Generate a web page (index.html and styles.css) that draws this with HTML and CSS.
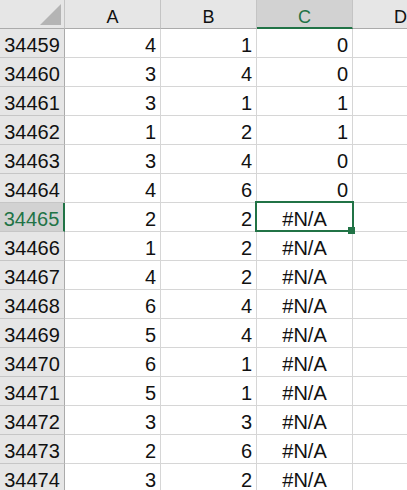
FILE: index.html
```html
<!DOCTYPE html>
<html lang="en">
<head>
    <meta charset="UTF-8">
    <title>Sheet1</title>
    <link rel="stylesheet" href="styles.css">
</head>
<body>

<div class="sheet">

    <!--  column headers  -->
    <div class="row head">
        <div class="corner">
            <svg width="21" height="21" viewBox="0 0 21 21"><polygon points="21,0 21,21 0,21" fill="#b4b4b4"/></svg>
        </div>
        <div class="col">A</div>
        <div class="col">B</div>
        <div class="col sel">C</div>
        <div class="col">D</div>
    </div>

    <div class="row"><div class="rh">34459</div><div class="num">4</div><div class="num">1</div><div class="num">0</div><div class="cell"></div></div>
    <div class="row"><div class="rh">34460</div><div class="num">3</div><div class="num">4</div><div class="num">0</div><div class="cell"></div></div>
    <div class="row"><div class="rh">34461</div><div class="num">3</div><div class="num">1</div><div class="num">1</div><div class="cell"></div></div>
    <div class="row"><div class="rh">34462</div><div class="num">1</div><div class="num">2</div><div class="num">1</div><div class="cell"></div></div>
    <div class="row"><div class="rh">34463</div><div class="num">3</div><div class="num">4</div><div class="num">0</div><div class="cell"></div></div>
    <div class="row"><div class="rh">34464</div><div class="num">4</div><div class="num">6</div><div class="num">0</div><div class="cell"></div></div>

    <!--  active cell row  -->
    <div class="row"><div class="rh sel">34465</div><div class="num">2</div><div class="num">2</div><div class="err active">#N/A</div><div class="cell"></div></div>

    <div class="row"><div class="rh">34466</div><div class="num">1</div><div class="num">2</div><div class="err">#N/A</div><div class="cell"></div></div>
    <div class="row"><div class="rh">34467</div><div class="num">4</div><div class="num">2</div><div class="err">#N/A</div><div class="cell"></div></div>
    <div class="row"><div class="rh">34468</div><div class="num">6</div><div class="num">4</div><div class="err">#N/A</div><div class="cell"></div></div>
    <div class="row"><div class="rh">34469</div><div class="num">5</div><div class="num">4</div><div class="err">#N/A</div><div class="cell"></div></div>
    <div class="row"><div class="rh">34470</div><div class="num">6</div><div class="num">1</div><div class="err">#N/A</div><div class="cell"></div></div>
    <div class="row"><div class="rh">34471</div><div class="num">5</div><div class="num">1</div><div class="err">#N/A</div><div class="cell"></div></div>
    <div class="row"><div class="rh">34472</div><div class="num">3</div><div class="num">3</div><div class="err">#N/A</div><div class="cell"></div></div>
    <div class="row"><div class="rh">34473</div><div class="num">2</div><div class="num">6</div><div class="err">#N/A</div><div class="cell"></div></div>
    <div class="row"><div class="rh">34474</div><div class="num">3</div><div class="num">2</div><div class="err">#N/A</div><div class="cell"></div></div>

</div>

</body>
</html>
```

FILE: styles.css
```css
html, body {
    margin: 0;
    overflow: hidden;
    background: #fff;
}

body {
    font-family: "Liberation Sans", Arial, sans-serif;
    color: #111;
}

/* window onto the sheet, column D is cut by the edge */
.sheet {
    width: 407px;
    overflow: hidden;
}

/* every row: row header + 4 columns */
.row {
    display: grid;
    grid-template-columns: 65px 96px 96px 96px 96px;
    height: 29px;
}

.row > div {
    box-sizing: border-box;
    height: 29px;
    border-right: 1px solid #d6d6d6;
    border-bottom: 1px solid #d6d6d6;
    font-size: 20px;
    line-height: 24px;
    padding-top: 4px;
    white-space: nowrap;
}

/* header strip */
.head > div {
    background: #e6e6e6;
    border-right-color: #c4c4c4;
    border-bottom-color: #ababab;
}

.corner {
    display: flex;
    justify-content: flex-end;
    align-items: flex-end;
    padding: 0 3px 3px 0 !important;
}

.corner svg {
    display: block;
}

.col {
    font-size: 18px !important;
    padding-top: 5px !important;
    text-align: center;
}

.col.sel {
    background: #d2d2d2 !important;
    color: #217346;
    border-bottom: 2px solid #217346 !important;
}

/* row numbers */
.rh {
    background: #e6e6e6;
    text-align: center;
    border-right-color: #ababab !important;
    border-bottom-color: #c6c6c6 !important;
}

.rh.sel {
    background: #d2d2d2;
    color: #217346;
    border-right: 2px solid #217346 !important;
}

.num {
    text-align: right;
    padding-right: 4px;
}

.err {
    text-align: center;
}

/* selection box + fill handle */
.active {
    position: relative;
}

.active::before {
    content: "";
    position: absolute;
    left: -2px;
    top: -2px;
    width: 99px;
    height: 31px;
    box-sizing: border-box;
    border: 2px solid #217346;
}

.active::after {
    content: "";
    position: absolute;
    left: 91px;
    top: 24px;
    width: 7px;
    height: 7px;
    background: #217346;
}
```
